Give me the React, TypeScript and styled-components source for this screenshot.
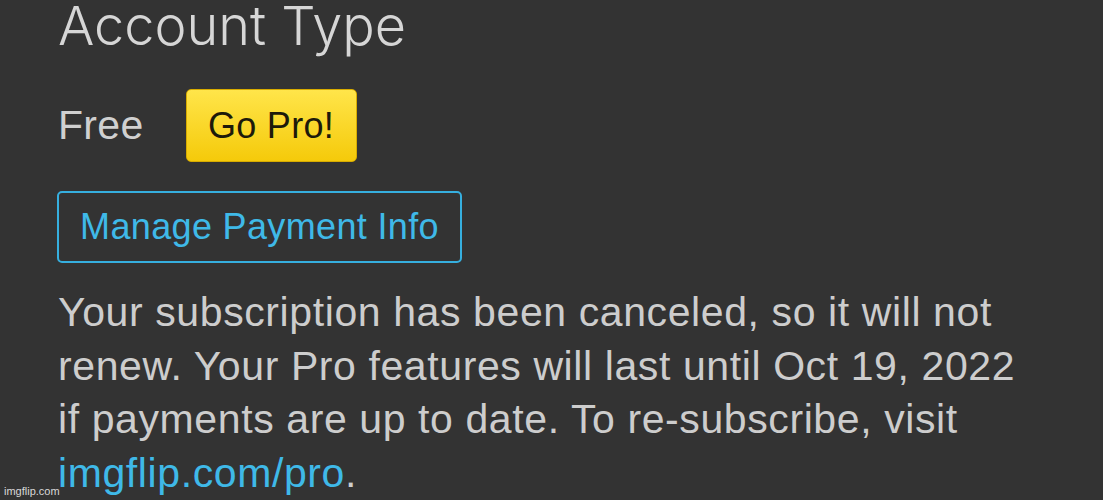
import React from "react";
import styled, {createGlobalStyle} from "styled-components";

const GlobalStyle = createGlobalStyle`
  html, body {
    margin: 0;
    padding: 0;
    background: #333333;
  }
  body {
    font-family: "Liberation Sans", Arial, sans-serif;
    overflow: hidden;
  }
`;

const Page = styled.div`
  position: relative;
  width: 1103px;
  height: 500px;
  background: #333333;
  overflow: hidden;
`;

const Content = styled.div`
  padding: 0 0 0 58px;
  display: flex;
  flex-direction: column;
  align-items: flex-start;
`;

const Title = styled.h1`
  margin: 0;
  font-family: "Inter", "Liberation Sans", sans-serif;
  font-weight: 300;
  font-size: 54px;
  line-height: 52px;
  color: #d6d6d6;
`;

const PlanRow = styled.div`
  display: flex;
  align-items: center;
  gap: 42px;
  margin-top: 37px;
`;

const PlanName = styled.span`
  font-size: 41px;
  letter-spacing: 0.3px;
  color: #d0d0d0;
`;

const GoProButton = styled.button`
  width: 171px;
  height: 73px;
  padding: 0;
  border: 1px solid #d8ac00;
  border-radius: 5px;
  background: linear-gradient(#ffe54a, #f5ca0a);
  font-family: "Liberation Sans", Arial, sans-serif;
  font-size: 36px;
  letter-spacing: 0.3px;
  color: #1d1a0a;
  cursor: pointer;
`;

const PaymentButton = styled.button`
  margin-top: 29px;
  margin-left: -1px;
  width: 405px;
  height: 72px;
  padding: 0;
  border: 2.5px solid #36afdf;
  border-radius: 5px;
  background: transparent;
  font-family: "Liberation Sans", Arial, sans-serif;
  font-size: 36px;
  letter-spacing: 0.35px;
  color: #3fb9e8;
  cursor: pointer;
`;

const Notice = styled.p`
  margin: 23px 0 0;
  width: 972px;
  font-size: 41px;
  letter-spacing: 0.6px;
  line-height: 53.5px;
  color: #cdcdcd;
`;

const Link = styled.a`
  color: #3fb9e8;
  text-decoration: none;
`;

const Watermark = styled.span`
  position: absolute;
  left: 4px;
  bottom: 3px;
  font-size: 11px;
  color: #d8d8d8;
`;

export default function App() {
  return (
    <>
      <GlobalStyle />
      <Page>
        <Content>
          <Title>Account Type</Title>
          <PlanRow>
            <PlanName>Free</PlanName>
            <GoProButton>Go Pro!</GoProButton>
          </PlanRow>
          <PaymentButton>Manage Payment Info</PaymentButton>
          <Notice>
            Your subscription has been canceled, so it will not renew. Your Pro
            features will last until Oct 19, 2022 if payments are up to date. To
            re-subscribe, visit <Link href="#">imgflip.com/pro</Link>.
          </Notice>
        </Content>
        <Watermark>imgflip.com</Watermark>
      </Page>
    </>
  );
}
